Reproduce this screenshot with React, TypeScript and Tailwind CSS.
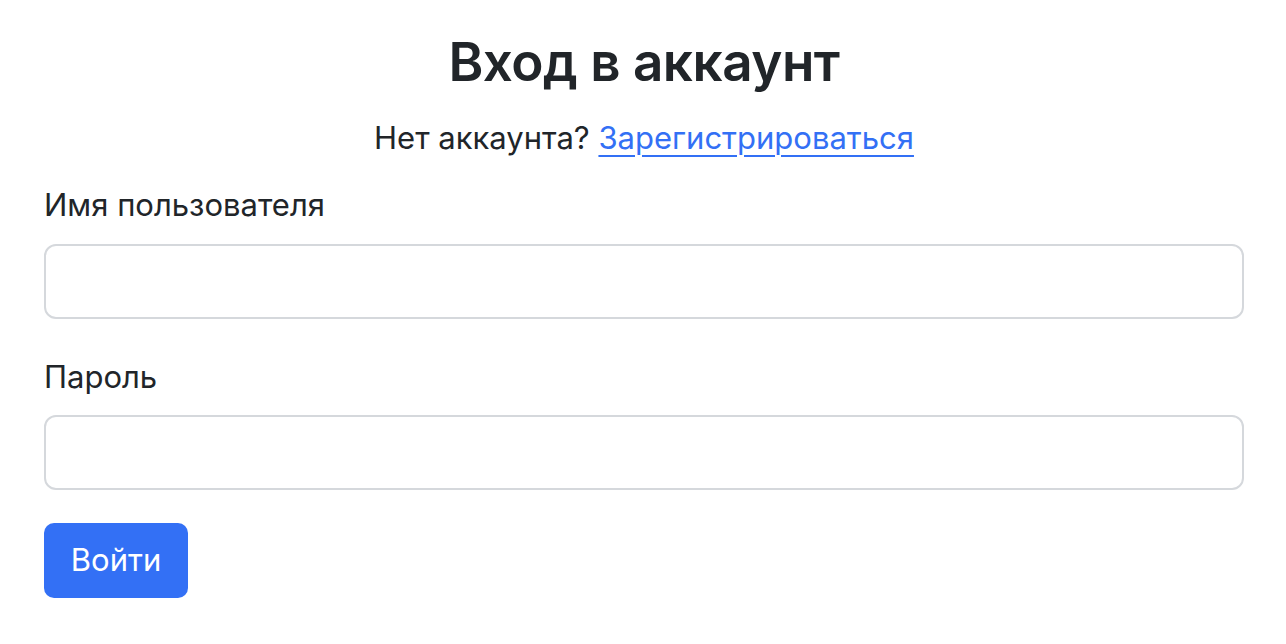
import React from 'react';

const font = { fontFamily: 'Inter, "Noto Sans", sans-serif' };

export default function App() {
  return (
    <div className="min-h-screen bg-white text-[#212529]" style={font}>
      <div className="pl-[44px] pr-[42px] pt-[31px]">
        <h1 className="text-center text-[53px] font-semibold leading-[1.2] tracking-[-0.5px]">
          Вход в аккаунт
        </h1>
        <p className="mt-[20px] text-center text-[31px] leading-[1.5]">
          Нет аккаунта?{' '}
          <a href="#" className="text-[#3370f5] underline decoration-2 underline-offset-[6px]">
            Зарегистрироваться
          </a>
        </p>

        <form className="mt-[21px]" onSubmit={(e) => e.preventDefault()}>
          <div className="mb-[35px]">
            <label className="mb-[15px] block text-[31px] leading-[1.5]">Имя пользователя</label>
            <input
              type="text"
              className="block h-[75px] w-full rounded-[12px] border-2 border-[#d5d8dc] bg-white px-[24px] text-[31px] outline-none"
            />
          </div>
          <div className="mb-[33px]">
            <label className="mb-[15px] block text-[31px] leading-[1.5]">Пароль</label>
            <input
              type="password"
              className="block h-[75px] w-full rounded-[12px] border-2 border-[#d5d8dc] bg-white px-[24px] text-[31px] outline-none"
            />
          </div>
          <button
            type="submit"
            className="h-[75px] w-[144px] rounded-[10px] bg-[#3370f5] text-[31px] text-white"
          >
            Войти
          </button>
        </form>
      </div>
    </div>
  );
}
